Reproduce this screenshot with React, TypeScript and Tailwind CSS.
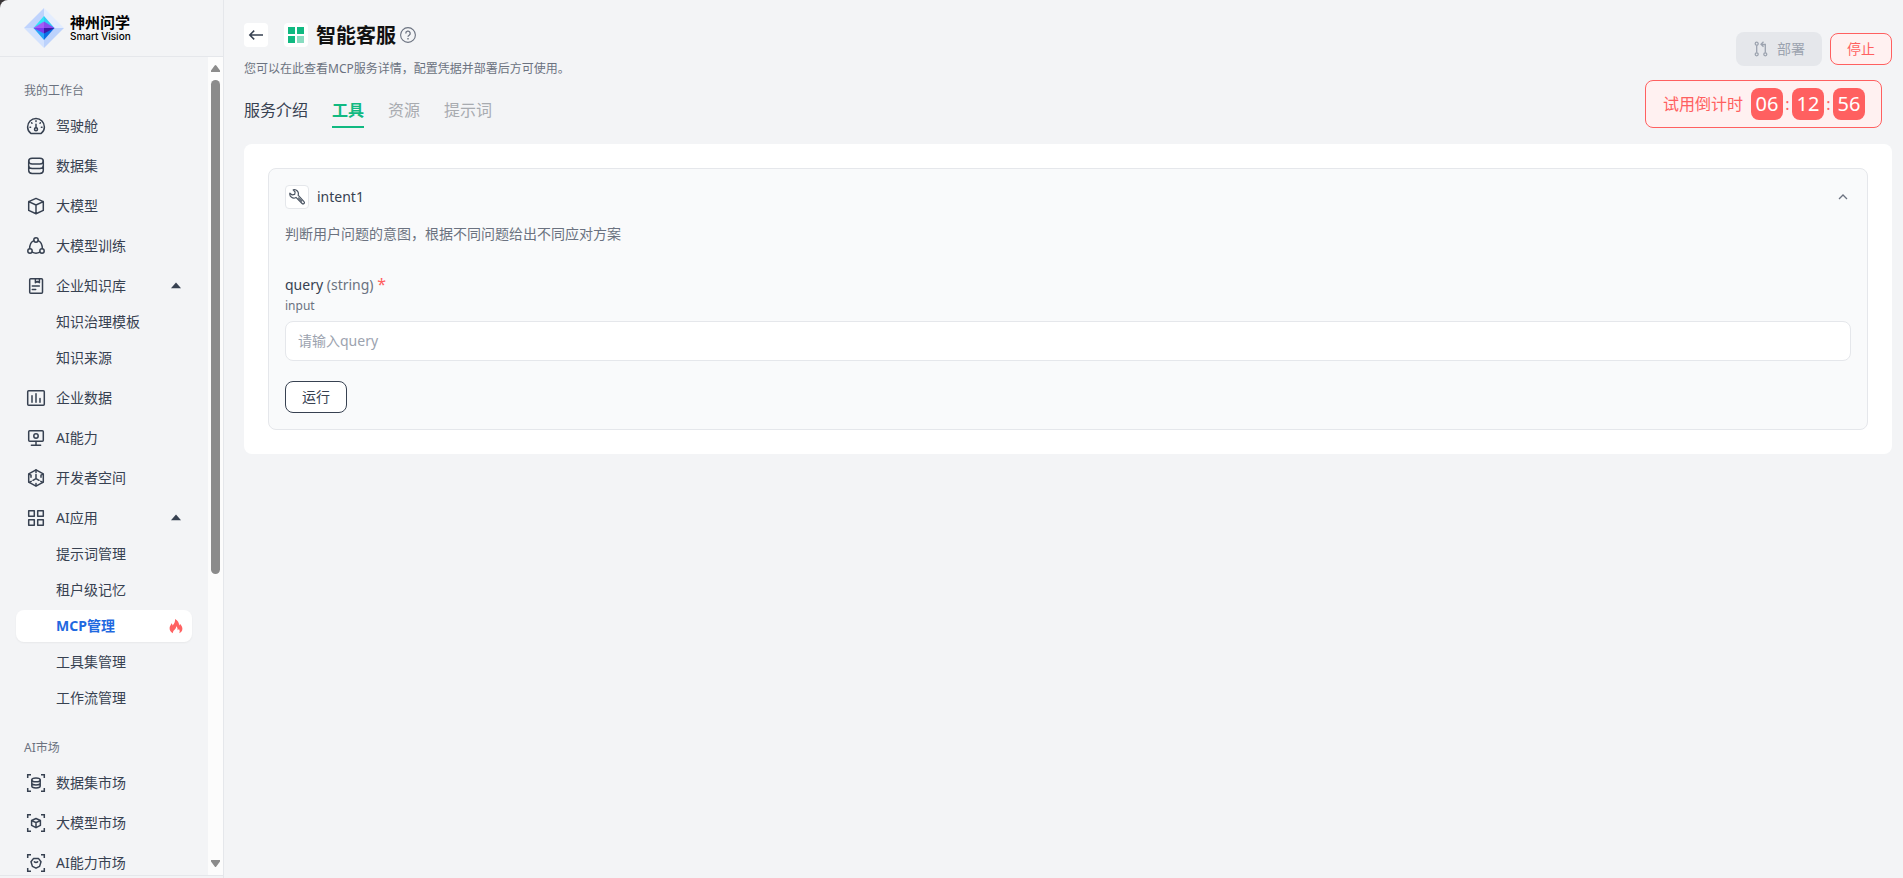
import { useState } from "react"
import type { ReactNode } from "react"
import clsx from "clsx"

type IconProps = { children: ReactNode }

function NavIcon({ children }: IconProps) {
  return (
    <svg
      viewBox="0 0 20 20"
      className="h-5 w-5 shrink-0"
      fill="none"
      stroke="currentColor"
      strokeWidth="1.5"
      strokeLinecap="round"
      strokeLinejoin="round"
    >
      {children}
    </svg>
  )
}

// corner brackets shared by the market icons
const brackets = (
  <path d="M1.7 5V1.7H5M15 1.7h3.3V5M18.3 15v3.3H15M5 18.3H1.7V15" strokeLinecap="butt" strokeLinejoin="miter" />
)

const icons = {
  cockpit: (
    <NavIcon>
      <path d="M4.8 17.4C2.8 15.9 1.6 13.7 1.6 11a8.4 8.4 0 0 1 16.8 0c0 2.7-1.2 4.9-3.2 6.4z" />
      <circle cx="10" cy="13.2" r="1.5" />
      <path d="M10 8.2v3.4M10 4.8v.6M5.6 6.8l.4.4M14.4 6.8l-.4.4M4 11.2h.6M15.4 11.2h.6" />
    </NavIcon>
  ),
  dataset: (
    <NavIcon>
      <path d="M2.700 5.200c0-1.700 1.500-2.900 3.400-2.900h7.800c1.900 0 3.400 1.200 3.400 2.900s-1.500 2.700-3.400 2.700H6.100c-1.900 0-3.400-1-3.400-2.700z" />
      <path d="M2.700 5.200v9.400c0 1.700 1.500 2.900 3.400 2.900h7.800c1.900 0 3.400-1.200 3.400-2.900V5.200M2.700 9.800c0 1.700 1.500 2.700 3.400 2.700h7.800c1.900 0 3.400-1 3.400-2.700" />
    </NavIcon>
  ),
  model: (
    <NavIcon>
      <path d="M10 2.4l7.3 3.2v8.8L10 17.8l-7.3-3.4V5.6zM2.7 5.6L10 9l7.3-3.4M10 9v8.8" />
    </NavIcon>
  ),
  training: (
    <NavIcon>
      <circle cx="10" cy="4" r="2.2" />
      <circle cx="4" cy="15" r="2.2" />
      <circle cx="16" cy="15" r="2.2" />
      <path d="M7.8 4.6C5.4 5.6 3.8 8.4 3.6 12.6M12.2 4.6c2.4 1 4 3.8 4.2 8M6.2 16.2c2.4 1.3 5.2 1.3 7.6 0" />
    </NavIcon>
  ),
  knowledge: (
    <NavIcon>
      <rect x="3.7" y="2.7" width="12.8" height="14.6" rx="1" />
      <path d="M9.400 2.700v4l2-1.300 2 1.300v-4M6.300 10h7M6.300 13.600h3.400" />
    </NavIcon>
  ),
  data: (
    <NavIcon>
      <rect x="1.7" y="2.7" width="16.6" height="14.6" rx="1" />
      <path d="M6 7.8v6.4M10 5.8v8.4M14 10.6v3.6" />
    </NavIcon>
  ),
  ability: (
    <NavIcon>
      <rect x="2.7" y="2.7" width="14.6" height="10.6" rx="1" />
      <circle cx="10" cy="8" r="2.2" />
      <path d="M10 13.6v3.6M5.4 17.3h9.2" />
    </NavIcon>
  ),
  developer: (
    <NavIcon>
      <path d="M10 1.8l7.3 4.1v8.2L10 18.2l-7.3-4.1V5.9z" />
      <path d="M10 2v2.4M10 6.4v4.2M10 10.6l-3 1.7M5.2 13.3l-2 1.1M10 10.6l3 1.7M14.8 13.3l2 1.1M3.400 6.300l1.600.9v2M16.600 6.300l-1.600.9v2M10 15.600v2" />
    </NavIcon>
  ),
  app: (
    <NavIcon>
      <rect x="2.7" y="2.7" width="5.6" height="5.6" />
      <rect x="11.7" y="2.7" width="5.6" height="5.6" />
      <rect x="2.7" y="11.7" width="5.6" height="5.6" />
      <rect x="11.7" y="11.7" width="5.6" height="5.6" />
    </NavIcon>
  ),
  datasetMarket: (
    <NavIcon>
      {brackets}
      <ellipse cx="10" cy="6.9" rx="4.2" ry="1.900" />
      <path d="M5.8 6.9v6.200c0 1.200 1.900 1.900 4.200 1.900s4.2-.7 4.2-1.900V6.900M5.800 10c0 1.200 1.900 1.900 4.200 1.900s4.200-.7 4.200-1.900" />
    </NavIcon>
  ),
  modelMarket: (
    <NavIcon>
      {brackets}
      <path d="M10 5.5l4.4 2v4.8L10 14.7l-4.4-2.4V7.5zM5.6 7.5L10 9.6l4.4-2.1M10 9.6v5.1" />
    </NavIcon>
  ),
  abilityMarket: (
    <NavIcon>
      {brackets}
      <path d="M7.4 5.6h5.2l2.4 3.2-1.4 4.6-3.6 1.8-3.6-1.8L5 8.8zM8.4 8.8c.9.7 2.3.7 3.2 0" />
    </NavIcon>
  ),
}

type NavItem = {
  label: string
  icon: ReactNode
  children?: { label: string; active?: boolean; hot?: boolean }[]
}

const sections: { title: string; items: NavItem[] }[] = [
  {
    title: "我的工作台",
    items: [
      { label: "驾驶舱", icon: icons.cockpit },
      { label: "数据集", icon: icons.dataset },
      { label: "大模型", icon: icons.model },
      { label: "大模型训练", icon: icons.training },
      {
        label: "企业知识库",
        icon: icons.knowledge,
        children: [{ label: "知识治理模板" }, { label: "知识来源" }],
      },
      { label: "企业数据", icon: icons.data },
      { label: "AI能力", icon: icons.ability },
      { label: "开发者空间", icon: icons.developer },
      {
        label: "AI应用",
        icon: icons.app,
        children: [
          { label: "提示词管理" },
          { label: "租户级记忆" },
          { label: "MCP管理", active: true, hot: true },
          { label: "工具集管理" },
          { label: "工作流管理" },
        ],
      },
    ],
  },
  {
    title: "AI市场",
    items: [
      { label: "数据集市场", icon: icons.datasetMarket },
      { label: "大模型市场", icon: icons.modelMarket },
      { label: "AI能力市场", icon: icons.abilityMarket },
    ],
  },
]

function Logo() {
  return (
    <svg viewBox="0 0 40 40" className="h-10 w-10">
      <path d="M20 0L0 20h20z" fill="#bfd3fd" />
      <path d="M20 0l20 20H20z" fill="#e4edfe" />
      <path d="M0 20l20 20V20z" fill="#d3e2fe" />
      <path d="M40 20L20 40V20z" fill="#bcd2fc" />
      <path d="M20 8L9.500 20H20z" fill="#2ee6f6" />
      <path d="M20 8l10.500 12H20z" fill="#35c9f5" />
      <path d="M9.500 20L20 32V20z" fill="#2aa5f8" />
      <path d="M30.500 20L20 32V20z" fill="#0a6fe6" />
      <path d="M20 13.500L9.500 20 20 21z" fill="#a35cf7" />
      <path d="M20 13.500L30.500 20 20 21z" fill="#8a4af0" />
      <path d="M9.500 20L20 25.500V20z" fill="#7a3bf0" />
      <path d="M30.500 20L20 25.500V20z" fill="#3c1aa8" />
    </svg>
  )
}

function Flame() {
  return (
    <svg viewBox="0 0 14 16" className="h-4 w-4" fill="#ff6262">
      <path d="M4 15.200C1.600 14 .4 12.200.6 9.800.8 7.800 2 7.200 2.400 5.200c.8.600 1.100 1.300 1.200 2.200C5.400 5.800 6.400 3.400 6 1c2.800 1.400 4.200 3.600 4.100 6.400.5-.4.800-1 .8-1.600 1.600 1.600 2.500 3.200 2.500 5 0 2.200-1.200 3.700-3.300 4.500.9-1.500.8-3-.2-4.400-.3.700-.7 1.100-1.300 1.300.2-1.700-.3-3-1.500-4 .1 1.700-.5 2.600-1.500 3.600C4.300 12.900 3.700 13.900 4 15.200z" />
    </svg>
  )
}

function Sidebar() {
  return (
    <aside className="flex w-56 shrink-0 flex-col border-r border-[#e5e7eb] pb-[2px]">
      <div className="flex h-[57px] shrink-0 items-center gap-[6px] border-b border-[#e5e7eb] pl-6">
        <Logo />
        <div className="pb-[2px] text-black">
          <div className="text-[15px] leading-[18px] font-bold">神州问学</div>
          <div className="font-[Inter] text-[10px] leading-[10px] font-medium">Smart Vision</div>
        </div>
      </div>

      <div className="flex min-h-0 flex-1 border-b border-[#e5e7eb]">
        <nav className="min-w-0 flex-1 overflow-hidden px-4">
          {sections.map((section) => (
            <section key={section.title} className="pt-6">
              <h2 className="mb-[9px] pl-2 text-xs leading-5 text-[#6b7280]">{section.title}</h2>
              <ul className="flex flex-col gap-2">
                {section.items.map((item) => (
                  <li key={item.label}>
                    <a href="#" className="flex h-8 items-center gap-[10px] pr-[11px] pl-[10px]">
                      {item.icon}
                      <span className="flex-1">{item.label}</span>
                      {item.children && (
                        <svg viewBox="0 0 10 8" className="h-2 w-[10px]" fill="currentColor">
                          <path d="M0 6.200L5 .5l5 5.700z" />
                        </svg>
                      )}
                    </a>
                    {item.children && (
                      <ul className="mt-1 flex flex-col gap-1">
                        {item.children.map((child) => (
                          <li key={child.label}>
                            <a
                              href="#"
                              className={clsx(
                                "flex h-8 items-center justify-between rounded-lg pr-2 pl-10",
                                child.active && "bg-white font-bold text-[#1f69e0] shadow-xs"
                              )}
                            >
                              {child.label}
                              {child.hot && <Flame />}
                            </a>
                          </li>
                        ))}
                      </ul>
                    )}
                  </li>
                ))}
              </ul>
            </section>
          ))}
        </nav>

        <div className="flex w-[15px] flex-col items-center bg-[#fcfcfc] py-2 text-[#8b8b8b]">
          <svg viewBox="0 0 9 7" className="h-[7px] w-[9px]" fill="currentColor">
            <path d="M3.700.6a1 1 0 0 1 1.600 0L9 5.500V7H0V5.500z" />
          </svg>
          <div className="my-2 flex-1">
            <div className="h-[64%] w-[9px] rounded-full bg-[#8b8b8b]" />
          </div>
          <svg viewBox="0 0 9 7" className="h-[7px] w-[9px]" fill="currentColor">
            <path d="M3.700 6.400a1 1 0 0 0 1.600 0L9 1.500V0H0v1.500z" />
          </svg>
        </div>
      </div>
    </aside>
  )
}

const tabs = [
  { label: "服务介绍", state: "normal" },
  { label: "工具", state: "active" },
  { label: "资源", state: "disabled" },
  { label: "提示词", state: "disabled" },
]

function Countdown() {
  return (
    <div className="mr-[10px] flex h-12 items-center rounded-lg border border-[#ff6060] bg-[#fff1f1] pr-4 pl-[17px] text-base text-[#ff6060]">
      <span className="mr-2">试用倒计时</span>
      {["06", "12", "56"].map((part, i) => (
        <div key={part} className="flex items-center">
          {i > 0 && <span className="w-[9px] text-center">:</span>}
          <span className="flex h-8 w-8 items-center justify-center rounded-lg bg-[#ff6060] text-xl text-white">
            {part}
          </span>
        </div>
      ))}
    </div>
  )
}

function PageHeader() {
  return (
    <header className="flex items-start justify-between">
      <div className="pt-[23px]">
        <div className="flex h-6 items-center">
          <button className="mr-4 flex h-6 w-6 items-center justify-center rounded bg-white" aria-label="返回">
            <svg viewBox="0 0 16 16" className="h-4 w-4" fill="none" stroke="#374151" strokeWidth="1.500">
              <path d="M15 8H2M6.200 3.600L1.800 8l4.400 4.400" />
            </svg>
          </button>
          <span className="mr-2 flex h-6 w-6 items-center justify-center rounded bg-white">
            <svg viewBox="0 0 16 16" className="h-4 w-4" fill="#10b981">
              <path d="M0 0h7v7H0zM9 0h7v7H9zM0 9h7v7H0z" />
              <path d="M9 9h7v7H9z" opacity="0.5" />
            </svg>
          </span>
          <h1 className="pt-[2px] text-xl font-bold text-[#111]">智能客服</h1>
          <svg viewBox="0 0 16 16" className="ml-1 h-4 w-4" fill="none" stroke="#6b7280" strokeWidth="1.100">
            <circle cx="8" cy="8" r="7.400" />
            <path d="M5.800 6.500a2.200 2.200 0 1 1 3.400 1.700c-.8.500-1.200.8-1.200 1.600" strokeWidth="1.300" />
            <path d="M8 11v1.400" strokeWidth="1.400" />
          </svg>
        </div>
        <p className="mt-[13px] text-xs leading-[18px] text-[#6b7280]">
          您可以在此查看MCP服务详情，配置凭据并部署后方可使用。
        </p>
        <div role="tablist" className="mt-5 flex gap-6 text-base leading-6">
          {tabs.map((tab) => (
            <button
              key={tab.label}
              role="tab"
              aria-selected={tab.state === "active"}
              disabled={tab.state === "disabled"}
              className={clsx(
                "h-[30px] border-b-2 pb-1",
                tab.state === "normal" && "border-transparent text-[#374151]",
                tab.state === "active" && "border-[#10b981] font-bold text-[#10b981]",
                tab.state === "disabled" && "border-transparent text-[#a8abb0]"
              )}
            >
              {tab.label}
            </button>
          ))}
        </div>
      </div>

      <div className="flex flex-col items-end gap-[14px] pt-8">
        <div className="flex items-center gap-2">
          <button
            disabled
            className="flex h-[34px] items-center gap-2 rounded-lg bg-[#e5e7eb] px-[17px] text-[#9ca3af]"
          >
            <svg viewBox="0 0 16 16" className="h-4 w-4" fill="none" stroke="currentColor" strokeWidth="1.300">
              <circle cx="3.700" cy="2.700" r="1.500" />
              <circle cx="3.700" cy="13.300" r="1.500" />
              <circle cx="12.300" cy="13.300" r="1.500" />
              <path d="M3.700 4.200v7.600M12.300 11.800V3.500H8.200M10.500.8L8 3.300l2.500 2.500" />
            </svg>
            部署
          </button>
          <button className="h-8 rounded-lg border border-[#ff6060] bg-[#fff1f1] px-4 text-[#ff6060]">停止</button>
        </div>
        <Countdown />
      </div>
    </header>
  )
}

function ToolCard() {
  const [query, setQuery] = useState("")

  return (
    <section className="rounded-lg border border-[#e5e7eb] bg-[#f9fafb] p-4">
      <div className="flex h-6 items-center">
        <span className="mr-2 flex h-6 w-6 items-center justify-center rounded border border-[#e5e7eb] bg-white">
          <svg
            viewBox="0 0 16 16"
            className="h-4 w-4"
            fill="none"
            stroke="#4b5563"
            strokeWidth="1.200"
            strokeLinejoin="round"
          >
            <path d="M4.200.9a4 4 0 0 1 4.900 5.300l5.900 6.400a1.300 1.300 0 0 1-1.900 1.900L7 8.400A4 4 0 0 1 .9 4.200l2.300 1.700 2.500-.5.400-2.400z" />
            <path d="M9.200 8.600l3.800 3.900" />
          </svg>
        </span>
        <h2 className="flex-1 text-sm text-[#374151]">intent1</h2>
        <button className="mr-[2px] text-[#6b7280]" aria-label="收起">
          <svg viewBox="0 0 12 12" className="h-3 w-3" fill="none" stroke="currentColor" strokeWidth="1.300">
            <path d="M2 8L6 4l4 4" />
          </svg>
        </button>
      </div>
      <p className="mt-[13px] leading-6 text-[#6b7280]">判断用户问题的意图，根据不同问题给出不同应对方案</p>

      <form onSubmit={(e) => e.preventDefault()} className="mt-[26px]">
        <label htmlFor="query" className="block h-6 leading-6 text-[#6b7280]">
          <span className="text-[#374151]">query</span> (string) <span className="text-base text-[#ff6060]">*</span>
        </label>
        <p className="mt-[2px] mb-[7px] text-xs leading-4 text-[#6b7280]">input</p>
        <input
          id="query"
          value={query}
          onChange={(e) => setQuery(e.target.value)}
          placeholder="请输入query"
          className="h-10 w-full rounded-lg border border-[#e5e7eb] bg-white px-3 pb-[2px] placeholder:text-[#9ca3af]"
        />
        <button className="mt-5 block h-8 rounded-lg border border-[#374151] bg-white px-4 text-[#374151]">
          运行
        </button>
      </form>
    </section>
  )
}

export default function App() {
  return (
    <div className="h-screen bg-[#3a3638] font-['Noto_Sans','Noto_Sans_CJK_SC',sans-serif] text-sm text-[#374151]">
      <div className="flex h-full overflow-hidden rounded-tl-lg bg-[#f3f4f6]">
        <Sidebar />
        <main className="min-w-0 flex-1 pr-[11px] pl-5">
          <PageHeader />
          <div className="mt-4 rounded-lg bg-white p-6">
            <ToolCard />
          </div>
        </main>
      </div>
    </div>
  )
}
